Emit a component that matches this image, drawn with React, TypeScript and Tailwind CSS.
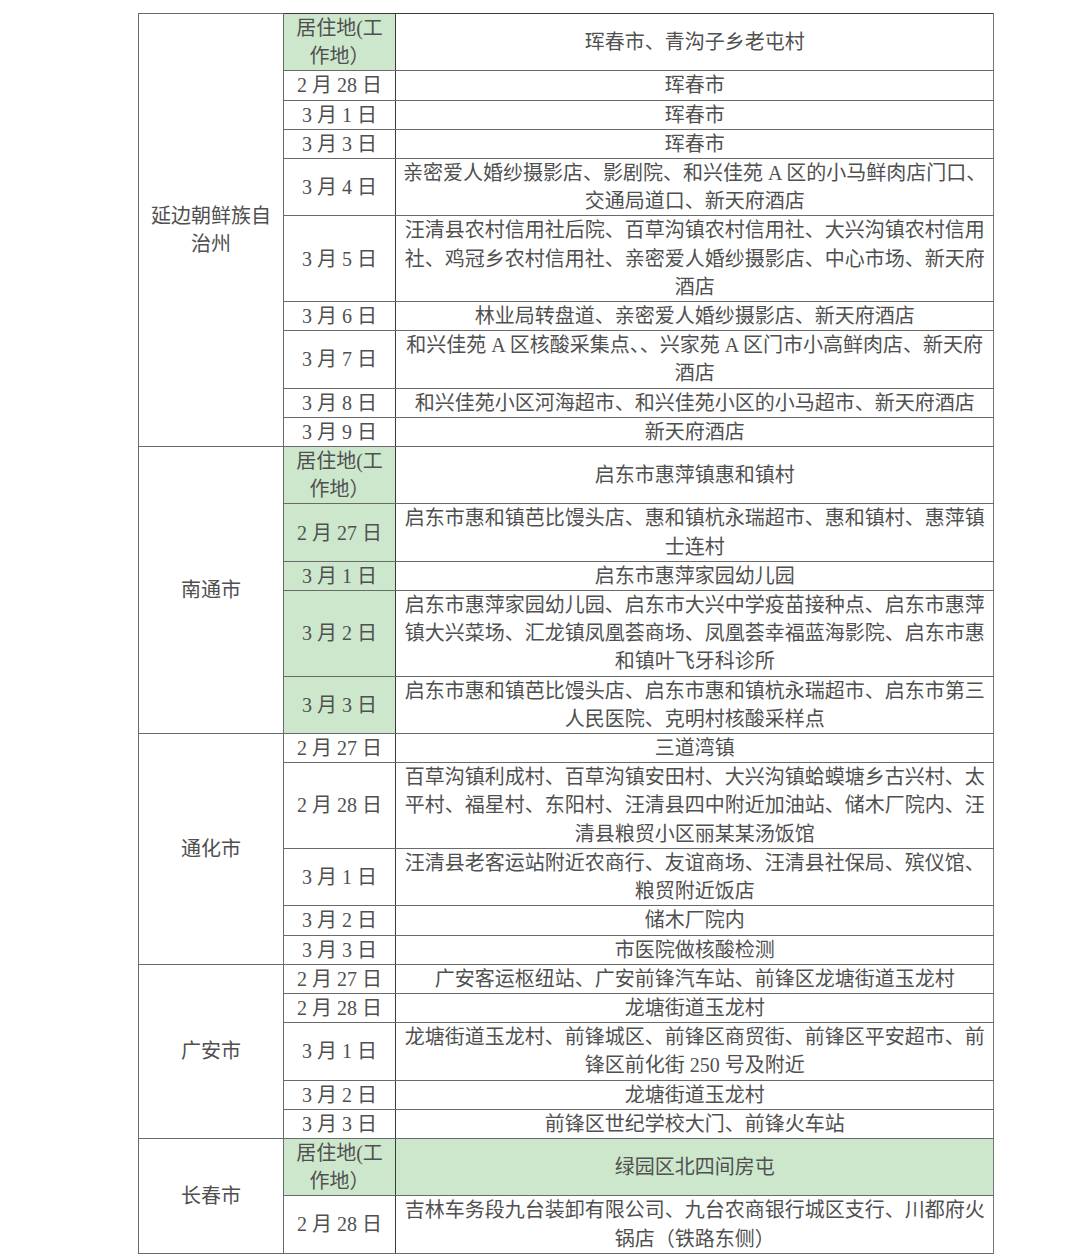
type Row = { date: string[]; place: string[]; dateGreen?: boolean; placeGreen?: boolean };
type Group = { city: string[]; rows: Row[] };

const HOME = ["居住地(工", "作地）"];

const groups: Group[] = [
  {
    city: ["延边朝鲜族自", "治州"],
    rows: [
      { date: HOME, place: ["珲春市、青沟子乡老屯村"], dateGreen: true },
      { date: ["2 月 28 日"], place: ["珲春市"] },
      { date: ["3 月 1 日"], place: ["珲春市"] },
      { date: ["3 月 3 日"], place: ["珲春市"] },
      { date: ["3 月 4 日"], place: ["亲密爱人婚纱摄影店、影剧院、和兴佳苑 A 区的小马鲜肉店门口、", "交通局道口、新天府酒店"] },
      {
        date: ["3 月 5 日"],
        place: ["汪清县农村信用社后院、百草沟镇农村信用社、大兴沟镇农村信用", "社、鸡冠乡农村信用社、亲密爱人婚纱摄影店、中心市场、新天府", "酒店"],
      },
      { date: ["3 月 6 日"], place: ["林业局转盘道、亲密爱人婚纱摄影店、新天府酒店"] },
      { date: ["3 月 7 日"], place: ["和兴佳苑 A 区核酸采集点、、兴家苑 A 区门市小高鲜肉店、新天府", "酒店"] },
      { date: ["3 月 8 日"], place: ["和兴佳苑小区河海超市、和兴佳苑小区的小马超市、新天府酒店"] },
      { date: ["3 月 9 日"], place: ["新天府酒店"] },
    ],
  },
  {
    city: ["南通市"],
    rows: [
      { date: HOME, place: ["启东市惠萍镇惠和镇村"], dateGreen: true },
      { date: ["2 月 27 日"], place: ["启东市惠和镇芭比馒头店、惠和镇杭永瑞超市、惠和镇村、惠萍镇", "士连村"], dateGreen: true },
      { date: ["3 月 1 日"], place: ["启东市惠萍家园幼儿园"], dateGreen: true },
      {
        date: ["3 月 2 日"],
        place: ["启东市惠萍家园幼儿园、启东市大兴中学疫苗接种点、启东市惠萍", "镇大兴菜场、汇龙镇凤凰荟商场、凤凰荟幸福蓝海影院、启东市惠", "和镇叶飞牙科诊所"],
        dateGreen: true,
      },
      { date: ["3 月 3 日"], place: ["启东市惠和镇芭比馒头店、启东市惠和镇杭永瑞超市、启东市第三", "人民医院、克明村核酸采样点"], dateGreen: true },
    ],
  },
  {
    city: ["通化市"],
    rows: [
      { date: ["2 月 27 日"], place: ["三道湾镇"] },
      {
        date: ["2 月 28 日"],
        place: ["百草沟镇利成村、百草沟镇安田村、大兴沟镇蛤蟆塘乡古兴村、太", "平村、福星村、东阳村、汪清县四中附近加油站、储木厂院内、汪", "清县粮贸小区丽某某汤饭馆"],
      },
      { date: ["3 月 1 日"], place: ["汪清县老客运站附近农商行、友谊商场、汪清县社保局、殡仪馆、", "粮贸附近饭店"] },
      { date: ["3 月 2 日"], place: ["储木厂院内"] },
      { date: ["3 月 3 日"], place: ["市医院做核酸检测"] },
    ],
  },
  {
    city: ["广安市"],
    rows: [
      { date: ["2 月 27 日"], place: ["广安客运枢纽站、广安前锋汽车站、前锋区龙塘街道玉龙村"] },
      { date: ["2 月 28 日"], place: ["龙塘街道玉龙村"] },
      { date: ["3 月 1 日"], place: ["龙塘街道玉龙村、前锋城区、前锋区商贸街、前锋区平安超市、前", "锋区前化街 250 号及附近"] },
      { date: ["3 月 2 日"], place: ["龙塘街道玉龙村"] },
      { date: ["3 月 3 日"], place: ["前锋区世纪学校大门、前锋火车站"] },
    ],
  },
  {
    city: ["长春市"],
    rows: [
      { date: HOME, place: ["绿园区北四间房屯"], dateGreen: true, placeGreen: true },
      { date: ["2 月 28 日"], place: ["吉林车务段九台装卸有限公司、九台农商银行城区支行、川都府火", "锅店（铁路东侧）"] },
    ],
  },
];

const Lines = ({ lines }: { lines: string[] }) => (
  <>
    {lines.map((l, i) => (
      <span key={i} className="block whitespace-nowrap">
        {l}
      </span>
    ))}
  </>
);

export default function App() {
  return (
    <div className="min-h-[1256px] w-[1080px] bg-white pt-[13px] pl-[138px] overflow-hidden">
      <table
        className="border-collapse text-[20px] leading-[28.2px] text-[#505050] [font-family:'Liberation_Serif','Noto_Sans_CJK_SC',serif]"
      >
        <colgroup>
          <col className="w-[145px]" />
          <col className="w-[112px]" />
          <col className="w-[598px]" />
        </colgroup>
        <tbody>
          {groups.map((g, gi) =>
            g.rows.map((r, ri) => (
              <tr key={`${gi}-${ri}`}>
                {ri === 0 && (
                  <td
                    rowSpan={g.rows.length}
                    className="border border-[#6a6a6a] p-0 text-center align-middle"
                  >
                    <Lines lines={g.city} />
                  </td>
                )}
                <td
                  className={`border border-[#3a3a3a] border-b-[#6a6a6a] p-0 text-center align-middle ${
                    r.dateGreen ? "bg-[#cde7cd]" : "bg-white"
                  }`}
                >
                  <Lines lines={r.date} />
                </td>
                <td
                  className={`border border-[#3a3a3a] border-b-[#6a6a6a] border-r-[#777] px-[7px] py-0 text-center align-middle ${
                    r.placeGreen ? "bg-[#cde7cd]" : "bg-white"
                  }`}
                >
                  <Lines lines={r.place} />
                </td>
              </tr>
            ))
          )}
        </tbody>
      </table>
    </div>
  );
}
